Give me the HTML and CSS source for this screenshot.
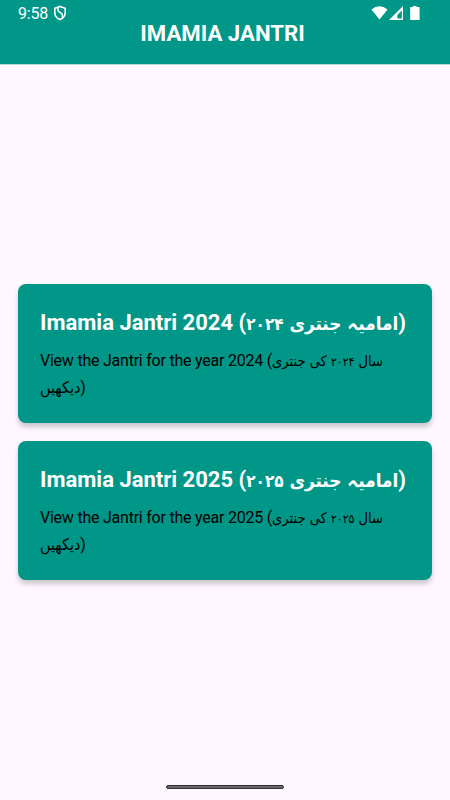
FILE: index.html
```html
<!DOCTYPE html>
<html lang="en">
<head>
    <meta charset="UTF-8">
    <meta name="viewport" content="width=device-width, initial-scale=1.0">
    <title>Imamia Jantri</title>
    <link rel="stylesheet" href="styles.css">
</head>
<body>
    <header>
        <div class="status">
            <span class="time">9:58</span>
            <svg class="shield" width="14" height="16" viewBox="0 0 14 16">
                <path d="M7 1.4 L12.2 3.2 V7.5 C12.2 11 10 13.4 7 14.6 C4 13.4 1.8 11 1.8 7.5 V3.2 Z" fill="none" stroke="#fff" stroke-width="1.6"/>
                <path d="M5 2.4 V5 C5 8 9.4 7 9.4 10 V12.6" fill="none" stroke="#fff" stroke-width="1.5"/>
            </svg>
            <svg class="signals" width="50" height="16" viewBox="0 0 50 16">
                <path d="M0.4 4.4 Q8.4 -2 16.6 4.4 L8.5 14.4 Z" fill="#fff"/>
                <path d="M32 1 V15 H18 Z M30.8 5.6 L26.4 10 V13.6 H30.8 Z" fill="#fff" fill-rule="evenodd"/>
                <path d="M42 1 H45.5 V2 H48 Q48.6 2 48.6 2.6 V14.4 Q48.6 15 48 15 H39.8 Q39.2 15 39.2 14.4 V2.6 Q39.2 2 39.8 2 H42 Z" fill="#fff"/>
            </svg>
        </div>
        <h1>IMAMIA JANTRI</h1>
    </header>

    <main>
        <a class="card">
            <h2>Imamia Jantri 2024 (<span class="urdu">امامیہ جنتری <span class="num">۲۰۲۴</span></span>)</h2>
            <p>View the Jantri for the year 2024 (<span class="urdu">سال <span class="num">۲۰۲۴</span> کی جنتری <span class="see">دیکھیں</span></span>)</p>
        </a>
        <a class="card">
            <h2>Imamia Jantri 2025 (<span class="urdu">امامیہ جنتری <span class="num">۲۰۲۵</span></span>)</h2>
            <p>View the Jantri for the year 2025 (<span class="urdu">سال <span class="num">۲۰۲۵</span> کی جنتری <span class="see">دیکھیں</span></span>)</p>
        </a>
    </main>

    <footer><div class="handle"></div></footer>
</body>
</html>
```

FILE: styles.css
```css
* {
    box-sizing: border-box;
}
body {
    margin: 0;
    height: 800px;
    display: flex;
    flex-direction: column;
    background: #fef7ff;
    font-family: Roboto, "Noto Sans", "DejaVu Sans", sans-serif;
}
header {
    height: 64px;
    background: #009688;
    color: #fff;
    box-shadow: 0 1px 0 rgba(0, 150, 136, 0.3);
}
.status {
    display: flex;
    align-items: center;
    height: 26px;
    padding: 0 29px 0 18px;
    font-size: 16px;
    letter-spacing: -0.2px;
}
.shield {
    margin-left: 5px;
}
.signals {
    margin-left: auto;
}
h1 {
    margin: -7px 0 0;
    padding-right: 5px;
    font-size: 22.2px;
    line-height: 28px;
    text-align: center;
}
main {
    flex: 1;
    display: flex;
    flex-direction: column;
    gap: 18px;
    padding: 220px 18px 0;
}
.card {
    height: 139px;
    padding: 22px;
    border-radius: 8px;
    background: #009688;
    box-shadow: 0 4px 5px rgba(0, 0, 0, 0.2);
}
h2 {
    margin: 0;
    color: #fff;
    font-size: 22px;
    line-height: 33px;
    white-space: nowrap;
}
p {
    margin: 8px 0 0;
    color: #000;
    font-size: 16px;
    line-height: 27px;
    letter-spacing: -0.23px;
}
.urdu {
    font-family: "DejaVu Sans Condensed", "DejaVu Sans", sans-serif;
    line-height: 1;
    letter-spacing: 0;
}
h2 .urdu {
    font-size: 18.8px;
}
h2 .num {
    font-size: 17px;
}
p .urdu {
    font-size: 14.6px;
}
p .num {
    font-size: 12px;
}
p .see {
    font-size: 16px;
}
footer {
    height: 20px;
}
.handle {
    width: 118px;
    height: 4px;
    margin: 5px auto 0;
    border: 1px solid #333;
    border-radius: 2px;
    background: #666;
}
```
